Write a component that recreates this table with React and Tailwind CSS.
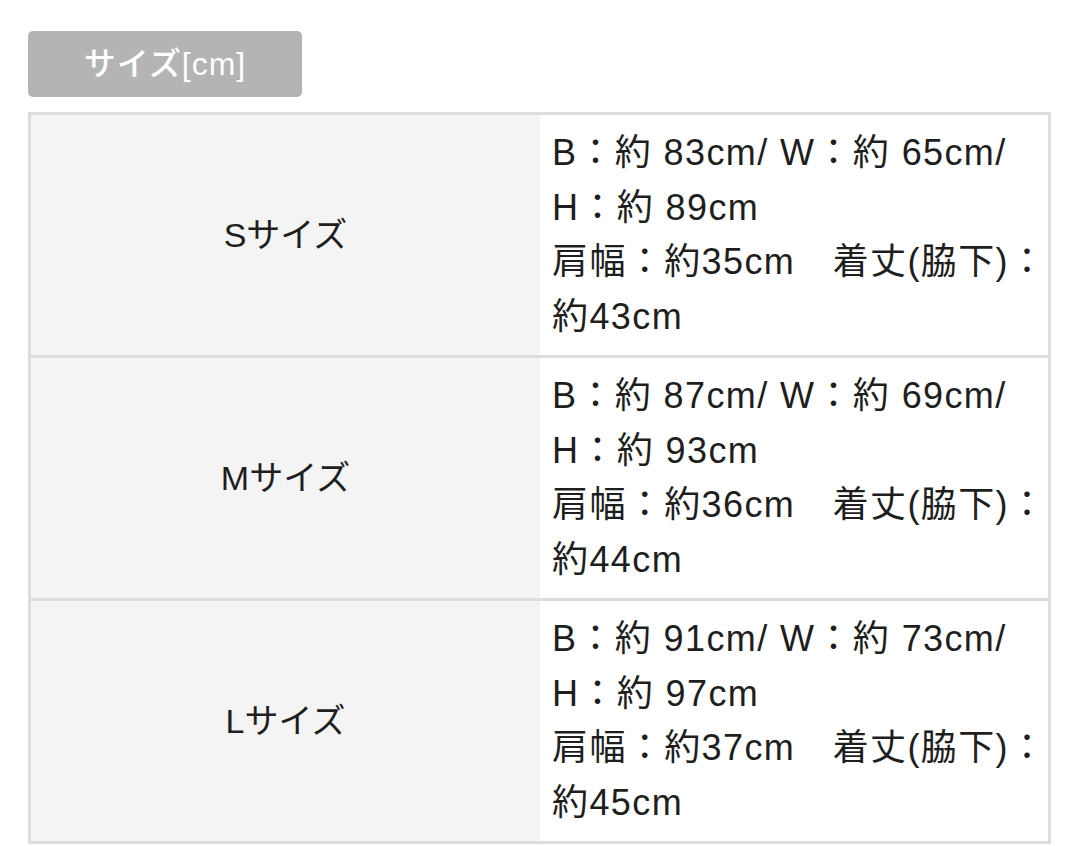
const sizes = [
  {
    label: 'Sサイズ',
    lines: ['B：約 83cm/ W：約 65cm/', 'H：約 89cm', '肩幅：約35cm　着丈(脇下)：', '約43cm'],
  },
  {
    label: 'Mサイズ',
    lines: ['B：約 87cm/ W：約 69cm/', 'H：約 93cm', '肩幅：約36cm　着丈(脇下)：', '約44cm'],
  },
  {
    label: 'Lサイズ',
    lines: ['B：約 91cm/ W：約 73cm/', 'H：約 97cm', '肩幅：約37cm　着丈(脇下)：', '約45cm'],
  },
]

const App = () => {
  return (
    <div
      className="min-h-screen bg-white pt-[31px] pl-[28px] pr-[29px] text-[#1e1e1e]"
      style={{ fontFamily: '"Liberation Sans", "Noto Sans CJK JP", sans-serif' }}
    >
      <div className="flex h-[66px] w-[274px] items-center justify-center rounded-[5px] bg-[#b4b4b4] text-[32px] font-medium tracking-[1px] text-white">
        サイズ[cm]
      </div>
      <div className="mt-[15px] border-[3px] border-[#dddddd]">
        {sizes.map((s, i) => (
          <div
            key={s.label}
            className={`flex ${i > 0 ? 'border-t-[3px] border-[#dddddd]' : ''}`}
          >
            <div className="flex w-[509px] items-center justify-center bg-[#f4f4f4] text-[34px]">
              {s.label}
            </div>
            <div className="flex-1 bg-white py-[11px] pl-[12px] text-[36px] leading-[54.5px] tracking-[1.4px]">
              {s.lines.map((l) => (
                <div key={l} className="whitespace-nowrap">
                  {l}
                </div>
              ))}
            </div>
          </div>
        ))}
      </div>
    </div>
  )
}

export default App
